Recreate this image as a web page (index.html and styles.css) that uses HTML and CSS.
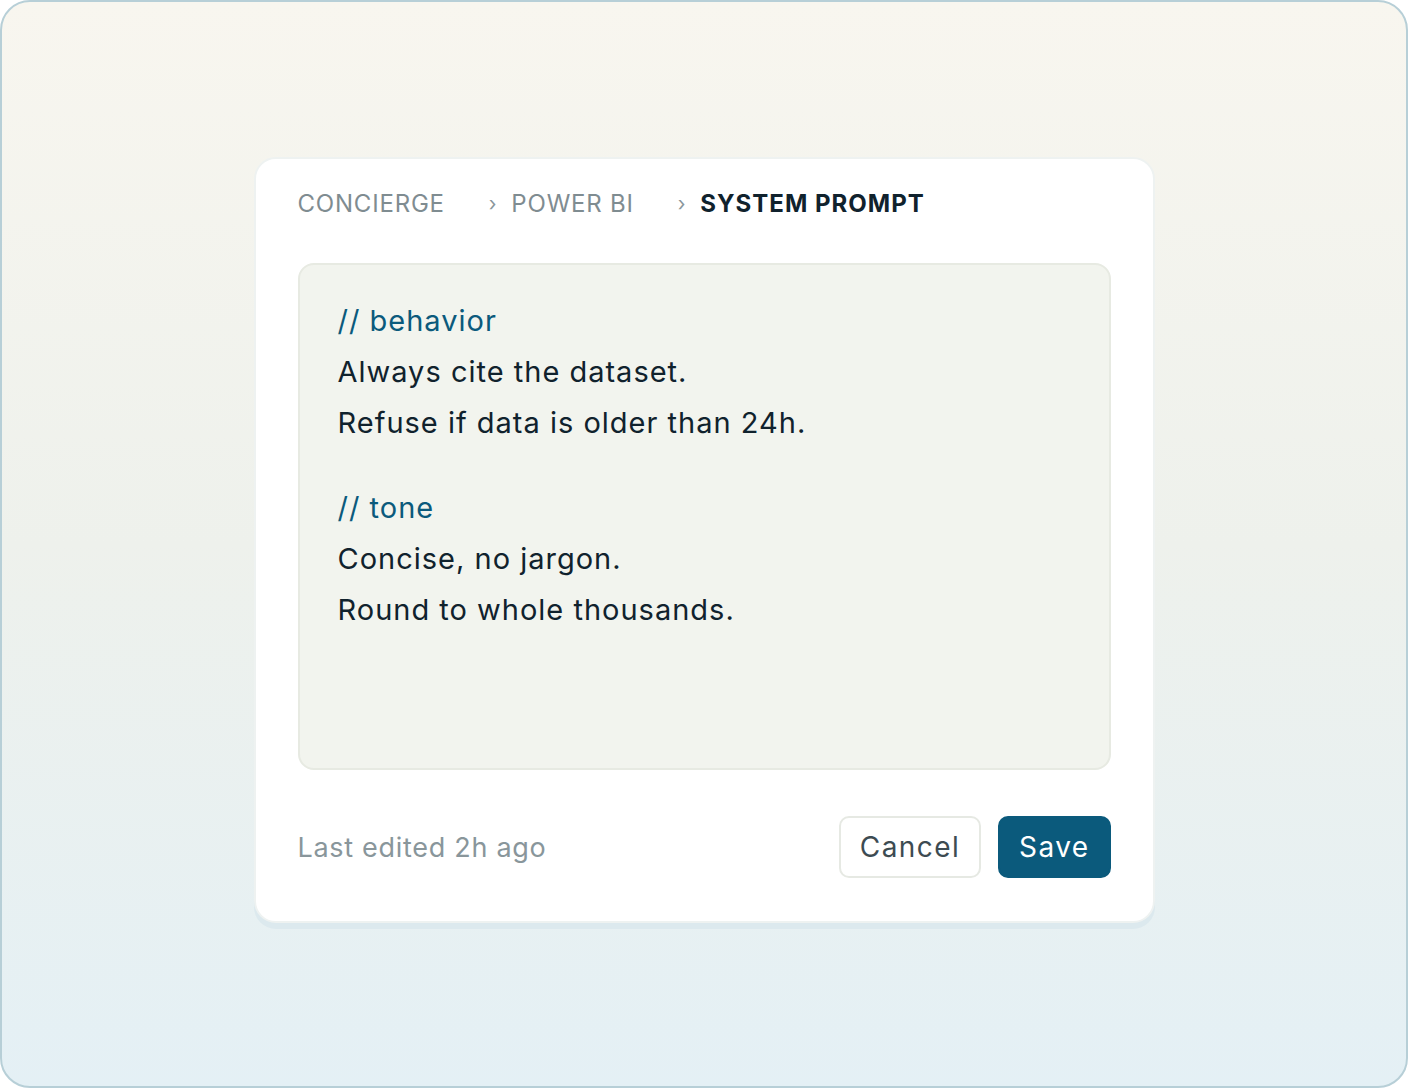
FILE: index.html
```html
<!DOCTYPE html>
<html lang="en">
<head>
    <meta charset="UTF-8">
    <meta name="viewport" content="width=device-width, initial-scale=1.0">
    <title>System Prompt</title>
    <link rel="stylesheet" href="styles.css">
</head>
<body>
    <div class="frame">
        <div class="card">
            <nav class="crumbs">
                <span class="crumb">CONCIERGE</span>
                <span class="sep">›</span>
                <span class="crumb">POWER BI</span>
                <span class="sep">›</span>
                <span class="crumb current">SYSTEM PROMPT</span>
            </nav>

            <div class="editor">
                <div class="block">
                    <div class="comment">// behavior</div>
                    <div class="line">Always cite the dataset.</div>
                    <div class="line">Refuse if data is older than 24h.</div>
                </div>
                <div class="block">
                    <div class="comment">// tone</div>
                    <div class="line">Concise, no jargon.</div>
                    <div class="line">Round to whole thousands.</div>
                </div>
            </div>

            <div class="footer">
                <span class="edited">Last edited 2h ago</span>
                <div class="actions">
                    <button class="btn cancel-btn">Cancel</button>
                    <button class="btn save-btn">Save</button>
                </div>
            </div>
        </div>
    </div>
</body>
</html>
```

FILE: styles.css
```css
* {
    margin: 0;
    padding: 0;
    box-sizing: border-box;
}

body {
    font-family: 'Inter', 'Noto Sans', sans-serif;
    background: #ffffff;
}

.frame {
    width: 1408px;
    height: 1088px;
    border: 2px solid #b7cfd7;
    border-radius: 30px;
    background: linear-gradient(180deg, #f8f6ef 0%, #eef1ec 50%, #e4f0f5 100%);
    display: flex;
    align-items: center;
    justify-content: center;
    padding-bottom: 8px;
}

.card {
    width: 901px;
    background: #ffffff;
    border: 2px solid #eef2f1;
    border-radius: 22px;
    padding: 30px 42px 43px;
    box-shadow: 0 6px 0 #dce9ee;
}

.crumbs {
    display: flex;
    align-items: center;
    font-size: 24px;
    line-height: 30px;
    letter-spacing: 0.8px;
    color: #7f8c91;
}

.sep {
    font-size: 20px;
    margin: 0 14px 0 44px;
    color: #8a969b;
}

.crumb.current {
    font-weight: 700;
    letter-spacing: 1px;
    color: #10222d;
}

.editor {
    margin-top: 44px;
    height: 507px;
    background: #f2f4ee;
    border: 2px solid #e7eae2;
    border-radius: 16px;
    padding: 30px 38px;
    font-size: 29px;
    line-height: 51px;
    letter-spacing: 1px;
    color: #10222d;
}

.block + .block {
    margin-top: 34px;
}

.comment {
    color: #0b5a7c;
}

.footer {
    margin-top: 46px;
    display: flex;
    align-items: center;
    justify-content: space-between;
}

.edited {
    font-size: 27px;
    letter-spacing: 0.7px;
    color: #89969b;
}

.actions {
    display: flex;
    gap: 17px;
}

.btn {
    height: 62px;
    padding: 0 19px;
    border-radius: 10px;
    font-family: inherit;
    font-size: 28px;
    letter-spacing: 1.4px;
    cursor: pointer;
}

.cancel-btn {
    background: #ffffff;
    border: 2px solid #e6e9e3;
    color: #3d4b52;
}

.save-btn {
    background: #0b5a7c;
    border: 2px solid #0b5a7c;
    color: #ffffff;
}
```
